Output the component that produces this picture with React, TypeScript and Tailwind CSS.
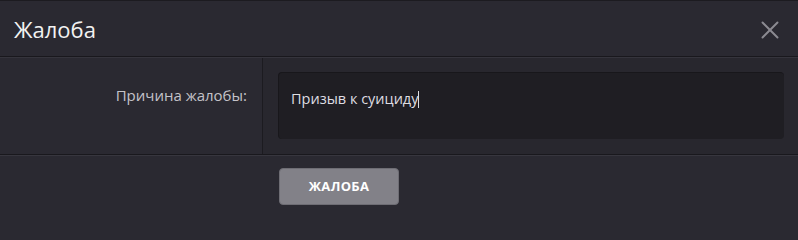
import { X } from 'lucide-react'

export default function App() {
  return (
    <div
      className="min-h-screen w-[798px] bg-[#2a2931] border-t border-[#1c1b20] flex flex-col overflow-hidden"
      style={{ fontFamily: '"Open Sans", "Noto Sans", sans-serif' }}
    >
      {/* шапка */}
      <div className="h-[56px] shrink-0 flex items-center justify-between pl-[14px] pr-[13px] border-b border-[#19181d]">
        <h2 className="text-[22px] text-[#f2f2f2] leading-none">Жалоба</h2>
        <button className="text-[#8b8a91] mt-[2px]">
          <X className="w-[30px] h-[30px]" strokeWidth={1.6} />
        </button>
      </div>

      {/* тело */}
      <div className="h-[98px] shrink-0 flex border-t border-[#35343c] border-b border-b-[#19181d]">
        <div className="w-[263px] shrink-0 border-r border-[#1c1b20] flex justify-end pt-[30px] pr-[15px]">
          <span className="text-[15px] text-[#c4c3c9] leading-none">Причина жалобы:</span>
        </div>
        <div className="flex-1 bg-[#28272e] pt-[14px] pl-[15px] pr-[14px]">
          <div className="h-[67px] rounded-[4px] bg-[#1f1e23] border-t border-l border-[#18171b] pl-[12px] pt-[13px]">
            <span className="text-[14.5px] text-[#dedde2] leading-none">
              Призыв к суициду
              <span className="inline-block w-px h-[17px] bg-[#dedde2] align-middle -mt-[2px]" />
            </span>
          </div>
        </div>
      </div>

      {/* подвал */}
      <div className="flex-1 border-t border-[#37363e] pl-[279px] pt-[12px]">
        <button className="w-[120px] h-[37px] rounded-[4px] bg-[#828188] border border-[#6e6d74] text-white text-[13px] font-bold tracking-wide">
          ЖАЛОБА
        </button>
      </div>
    </div>
  )
}
